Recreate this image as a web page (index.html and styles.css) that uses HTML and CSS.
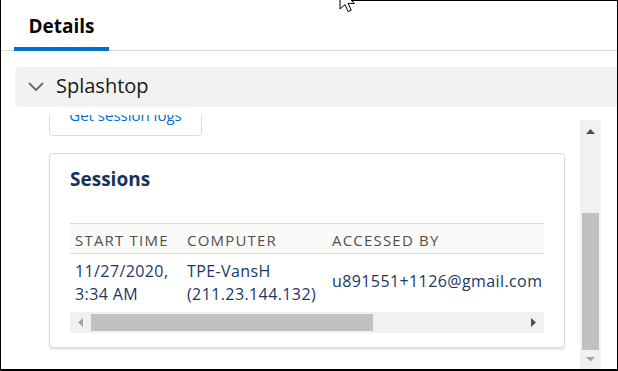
FILE: index.html
```html
<!DOCTYPE html>
<html lang="en">
<head>
<meta charset="utf-8">
<title>Details - Splashtop</title>
<link rel="stylesheet" href="styles.css">
</head>
<body>
<div class="frame">
  <div class="tabs">
    <div class="tab">Details</div>
  </div>
  <div class="section-header">
    <svg class="chevron" width="16" height="10" viewBox="0 0 16 10"><polyline points="1.5,1.5 8,8 14.5,1.5" fill="none" stroke="#706e6b" stroke-width="2" stroke-linecap="round" stroke-linejoin="round"/></svg>
    <span class="section-title">Splashtop</span>
  </div>
  <div class="body">
    <div class="content">
      <button class="btn">Get session logs</button>
      <div class="card">
        <h2 class="card-title">Sessions</h2>
        <div class="table-wrap">
          <div class="table-clip">
            <table class="sessions">
              <colgroup><col class="c1"><col class="c2"><col class="c3"></colgroup>
              <thead>
                <tr><th>Start Time</th><th>Computer</th><th>Accessed By</th></tr>
              </thead>
              <tbody>
                <tr><td>11/27/2020,<br>3:34 AM</td><td>TPE-VansH<br>(211.23.144.132)</td><td class="mid">u891551+1126@gmail.com</td></tr>
              </tbody>
            </table>
          </div>
          <div class="hscroll">
            <div class="sb-btn"><svg width="5" height="9" viewBox="0 0 5 9"><polygon points="5,0 0,4.5 5,9" fill="#a3a3a3"/></svg></div>
            <div class="h-thumb"></div>
            <div class="sb-fill"></div>
            <div class="sb-btn"><svg width="5" height="9" viewBox="0 0 5 9"><polygon points="0,0 5,4.5 0,9" fill="#505050"/></svg></div>
          </div>
        </div>
      </div>
    </div>
    <div class="vscroll">
      <div class="sb-btn"><svg width="9" height="5" viewBox="0 0 9 5"><polygon points="0,5 4.5,0 9,5" fill="#505050"/></svg></div>
      <div class="v-gap"></div>
      <div class="v-thumb"></div>
      <div class="sb-btn down"><svg width="9" height="5" viewBox="0 0 9 5"><polygon points="0,0 9,0 4.5,4.5" fill="#a3a3a3"/></svg></div>
    </div>
  </div>
  <svg class="cursor" width="17" height="26" viewBox="0 0 17 26"><polygon points="1,1 1,21 6,16.6 9.1,23.5 12.25,22.25 9.1,15.4 15.4,15.4" fill="#fff" stroke="#000" stroke-width="1" stroke-linejoin="miter"/></svg>
</div>
</body>
</html>
```

FILE: styles.css
```css
* { box-sizing: border-box; }
html, body { margin: 0; padding: 0; background: #fff; }
body { font-family: "Open Sans", "DejaVu Sans", sans-serif; }

.frame {
  position: relative;
  width: 618px;
  height: 371px;
  border-left: 1px solid #000;
  border-right: 1px solid #000;
  border-bottom: 2px solid #000;
  overflow: hidden;
  display: flex;
  flex-direction: column;
}
.frame::before {
  content: "";
  position: absolute;
  top: 0;
  left: 350px;
  right: 0;
  height: 1px;
  background: #000;
}

.tabs {
  height: 51px;
  flex: 0 0 51px;
  border-bottom: 1px solid #dddbda;
  display: flex;
  padding-left: 13px;
}
.tab {
  width: 95px;
  height: 51px;
  margin-bottom: -1px;
  border-bottom: 4px solid #0070d2;
  padding-top: 13px;
  text-align: center;
  font-size: 19px;
  font-weight: 700;
  color: #080707;
  line-height: normal;
}

.section-header {
  margin: 16px 0 0 14px;
  flex: 0 0 40px;
  height: 40px;
  background: #f3f2f2;
  border-radius: 4px 0 0 4px;
  display: flex;
  align-items: center;
  padding: 0 0 3px 13px;
}
.chevron { display: block; margin-top: 3px; }
.section-title {
  margin-left: 12px;
  font-size: 20px;
  color: #181818;
  line-height: 24px;
}

.body {
  flex: 1 1 auto;
  display: flex;
  overflow: hidden;
}
.content {
  flex: 0 0 579px;
  margin-top: 8px;
  overflow: hidden;
  padding-left: 48px;
}
.btn {
  margin-top: -11px;
  width: 153px;
  height: 32px;
  padding: 0;
  border: 1px solid #dddbda;
  border-radius: 4px;
  background: #fff;
  color: #0070d2;
  font-family: "Open Sans", "DejaVu Sans", sans-serif;
  font-size: 15px;
  line-height: 20px;
  display: flex;
  align-items: flex-start;
  justify-content: center;
}

.card {
  margin-top: 17px;
  width: 516px;
  border: 1px solid #dddbda;
  border-radius: 4px;
  box-shadow: 0 2px 2px rgba(0, 0, 0, 0.1);
  padding: 13px 20px 14px 20px;
  background: #fff;
}
.card-title {
  margin: 0;
  font-size: 19px;
  font-weight: 700;
  line-height: 25px;
  color: #16325c;
}
.table-wrap {
  margin-top: 31px;
  width: 474px;
}
.table-clip {
  width: 474px;
  overflow: hidden;
}
.sessions {
  table-layout: fixed;
  width: 560px;
  border-collapse: separate;
  border-spacing: 0;
}
.c1 { width: 112px; }
.c2 { width: 145px; }
.c3 { width: 303px; }
.sessions th {
  text-align: left;
  font-weight: 400;
  font-size: 15px;
  line-height: 20px;
  text-transform: uppercase;
  letter-spacing: 1.2px;
  color: #514f4d;
  background: #fafaf9;
  border-top: 1px solid #dddbda;
  border-bottom: 1px solid #dddbda;
  padding: 6px 5px 3px 5px;
  white-space: nowrap;
}
.sessions td {
  font-size: 16px;
  line-height: 23px;
  letter-spacing: 0.4px;
  color: #1b3764;
  padding: 6px 5px;
  vertical-align: top;
  white-space: nowrap;
}
.sessions td.mid { vertical-align: middle; padding-bottom: 9px; }

.hscroll {
  display: flex;
  height: 21px;
  background: #f1f1f1;
}
.sb-btn {
  flex: 0 0 21px;
  width: 21px;
  height: 21px;
  display: flex;
  align-items: center;
  justify-content: center;
}
.sb-btn svg { display: block; }
.h-thumb {
  flex: 0 0 282px;
  height: 17px;
  margin-top: 2px;
  background: #c1c1c1;
}
.sb-fill { flex: 1 1 auto; }

.vscroll {
  flex: 0 0 21px;
  margin-top: 13px;
  background: #f1f1f1;
  display: flex;
  flex-direction: column;
  overflow: hidden;
}
.vscroll .sb-btn:first-child { align-items: flex-start; padding-top: 9px; }
.v-gap { flex: 0 0 72px; }
.v-thumb {
  flex: 0 0 137px;
  margin: 0 2px;
  background: #c1c1c1;
}
.sb-btn.down { align-items: flex-start; padding-top: 7px; }

.cursor {
  position: absolute;
  left: 338px;
  top: -12px;
}
```
